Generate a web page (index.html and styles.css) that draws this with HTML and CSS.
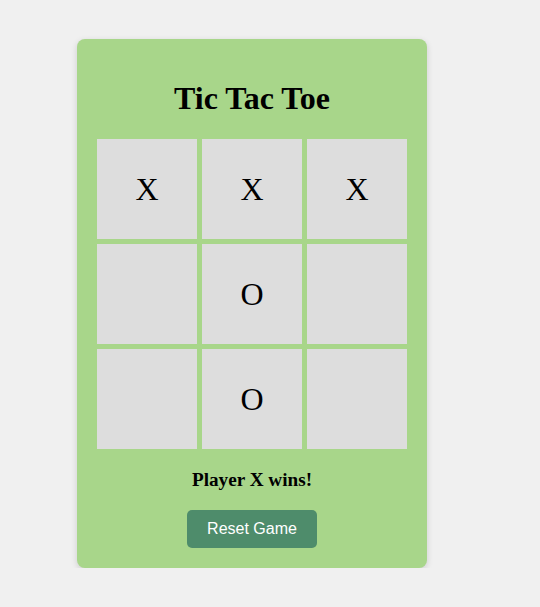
FILE: index.html
```html
<!DOCTYPE html>
<html>
<head>
<meta charset="utf-8">
<link rel="stylesheet" href="styles.css">
</head>
<body>
<div class="page">
  <div class="card">
    <h1 class="title">Tic Tac Toe</h1>
    <div class="board">
      <div class="cell">X</div>
      <div class="cell">X</div>
      <div class="cell">X</div>
      <div class="cell"></div>
      <div class="cell">O</div>
      <div class="cell"></div>
      <div class="cell"></div>
      <div class="cell">O</div>
      <div class="cell"></div>
    </div>
    <div class="status">Player X wins!</div>
    <button class="reset">Reset Game</button>
  </div>
</div>
</body>
</html>
```
FILE: styles.css
```css
html, body {
  margin: 0;
  padding: 0;
  background: #f0f0f0;
  font-family: "Liberation Serif", "Times New Roman", serif;
}
.page {
  padding: 39px 0 0 77px;
}
.card {
  width: 310px;
  padding: 20px;
  background: #a8d68a;
  border-radius: 8px;
  box-shadow: 0 2px 6px rgba(0, 0, 0, 0.15);
  display: flex;
  flex-direction: column;
  align-items: center;
}
.title {
  font-size: 32px;
  font-weight: bold;
  margin: 21px 0 22px;
  line-height: 37px;
}
.board {
  display: grid;
  grid-template-columns: repeat(3, 100px);
  grid-template-rows: repeat(3, 100px);
  gap: 5px;
}
.cell {
  background: #dddddd;
  display: flex;
  align-items: center;
  justify-content: center;
  font-size: 32px;
}
.status {
  margin: 20px 0 19px;
  font-size: 19.2px;
  line-height: 22px;
  font-weight: bold;
}
.reset {
  font-family: "Liberation Sans", Arial, sans-serif;
  font-size: 16px;
  color: #fff;
  background: #4e8c6b;
  border: none;
  border-radius: 5px;
  padding: 10px 20px;
  line-height: 18px;
}
```
